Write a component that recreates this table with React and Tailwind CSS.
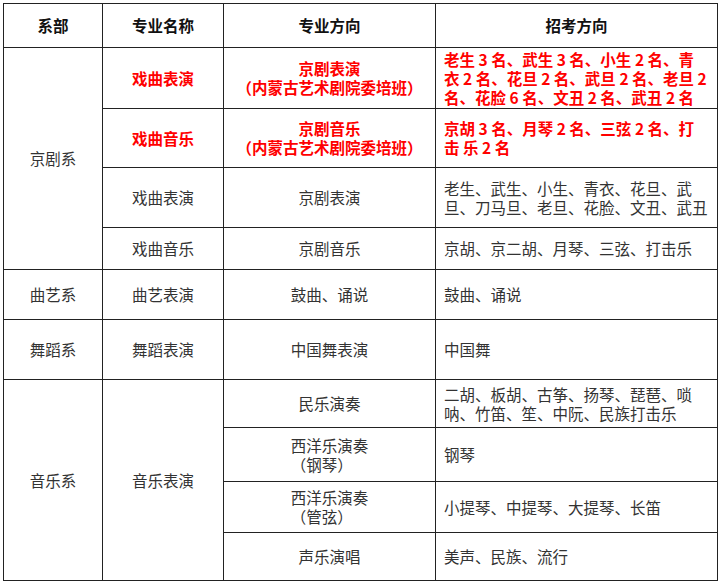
import React from 'react';

// 招生专业表
const td = "border border-[#222] text-center align-middle";
const tdLeft = "border border-[#222] text-left align-middle pl-2 pr-1";
const red = "text-[#ff0000] font-bold";

export default function App() {
  return (
    <div className="w-[722px] h-[584px] bg-white pt-[3px] pl-[3px] font-['Noto_Sans_CJK_SC',sans-serif] text-[15.5px] leading-[19px] text-[#333]">
      <table className="w-[714px] table-fixed border-collapse">
        <colgroup>
          <col className="w-[99px]" />
          <col className="w-[121px]" />
          <col className="w-[212px]" />
          <col className="w-[282px]" />
        </colgroup>
        <tbody>
          {/* 表头 */}
          <tr className="h-[44px] font-bold text-[#111]">
            <td className={td}>系部</td>
            <td className={td}>专业名称</td>
            <td className={td}>专业方向</td>
            <td className={td}>招考方向</td>
          </tr>

          {/* 京剧系 */}
          <tr className="h-[61px]">
            <td className={td} rowSpan={4}>京剧系</td>
            <td className={`${td} ${red}`}>戏曲表演</td>
            <td className={`${td} ${red}`}>
              <div>京剧表演</div>
              <div>（内蒙古艺术剧院委培班）</div>
            </td>
            <td className={`${tdLeft} ${red} whitespace-nowrap`}>
              <div>老生 3 名、武生 3 名、小生 2 名、青</div>
              <div>衣 2 名、花旦 2 名、武旦 2 名、老旦 2</div>
              <div>名、花脸 6 名、文丑 2 名、武丑 2 名</div>
            </td>
          </tr>
          <tr className="h-[59px]">
            <td className={`${td} ${red}`}>戏曲音乐</td>
            <td className={`${td} ${red}`}>
              <div>京剧音乐</div>
              <div>（内蒙古艺术剧院委培班）</div>
            </td>
            <td className={`${tdLeft} ${red} whitespace-nowrap`}>
              <div>京胡 3 名、月琴 2 名、三弦 2 名、打</div>
              <div>击 乐 2 名</div>
            </td>
          </tr>
          <tr className="h-[60px]">
            <td className={td}>戏曲表演</td>
            <td className={td}>京剧表演</td>
            <td className={`${tdLeft} whitespace-nowrap`}>
              <div>老生、武生、小生、青衣、花旦、武</div>
              <div>旦、刀马旦、老旦、花脸、文丑、武丑</div>
            </td>
          </tr>
          <tr className="h-[42px]">
            <td className={td}>戏曲音乐</td>
            <td className={td}>京剧音乐</td>
            <td className={tdLeft}>京胡、京二胡、月琴、三弦、打击乐</td>
          </tr>

          {/* 曲艺系 */}
          <tr className="h-[50px]">
            <td className={td}>曲艺系</td>
            <td className={td}>曲艺表演</td>
            <td className={td}>鼓曲、诵说</td>
            <td className={tdLeft}>鼓曲、诵说</td>
          </tr>

          {/* 舞蹈系 */}
          <tr className="h-[60px]">
            <td className={td}>舞蹈系</td>
            <td className={td}>舞蹈表演</td>
            <td className={td}>中国舞表演</td>
            <td className={tdLeft}>中国舞</td>
          </tr>

          {/* 音乐系 */}
          <tr className="h-[48px]">
            <td className={td} rowSpan={4}>音乐系</td>
            <td className={td} rowSpan={4}>音乐表演</td>
            <td className={td}>民乐演奏</td>
            <td className={`${tdLeft} whitespace-nowrap`}>
              <div>二胡、板胡、古筝、扬琴、琵琶、唢</div>
              <div>呐、竹笛、笙、中阮、民族打击乐</div>
            </td>
          </tr>
          <tr className="h-[54px]">
            <td className={td}>
              <div className="inline-block text-left">
                <div>西洋乐演奏</div>
                <div>（钢琴）</div>
              </div>
            </td>
            <td className={tdLeft}>钢琴</td>
          </tr>
          <tr className="h-[51px]">
            <td className={td}>
              <div className="inline-block text-left">
                <div>西洋乐演奏</div>
                <div>（管弦）</div>
              </div>
            </td>
            <td className={tdLeft}>小提琴、中提琴、大提琴、长笛</td>
          </tr>
          <tr className="h-[48px]">
            <td className={td}>声乐演唱</td>
            <td className={tdLeft}>美声、民族、流行</td>
          </tr>
        </tbody>
      </table>
    </div>
  );
}
